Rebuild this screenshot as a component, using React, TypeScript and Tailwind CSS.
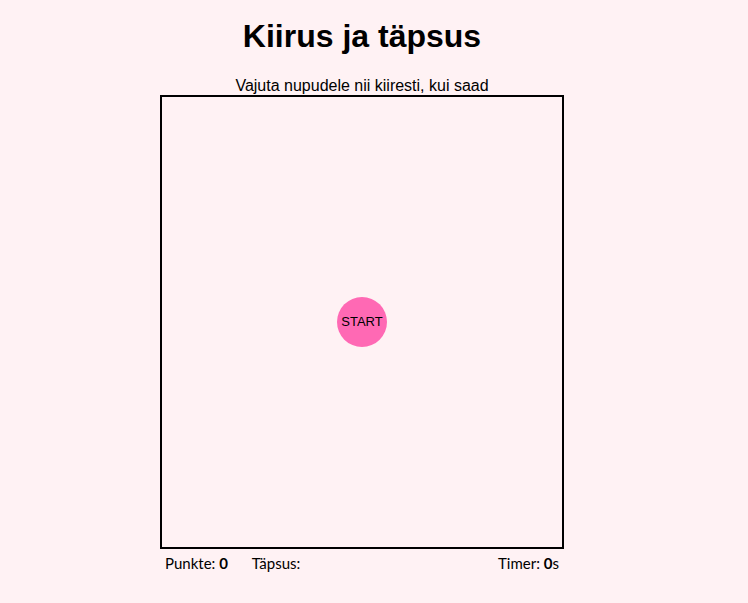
import React from "react";

export default function App() {
  return (
    <main className="min-h-screen bg-[#fff2f4] pr-6 pt-4 font-['Liberation_Sans',Arial,sans-serif] text-black">
      <div className="mx-auto w-full max-w-[404px]">
        <h1 className="text-center text-[32px] leading-10 font-bold">Kiirus ja täpsus</h1>
        <p className="mt-5 text-center text-base leading-[19px]">Vajuta nupudele nii kiiresti, kui saad</p>
        <section className="flex h-[454px] items-center justify-center border-2 border-black">
          <button type="button" className="size-[50px] rounded-full bg-[#ff69b4] text-[13px]">
            START
          </button>
        </section>
        <div className="flex px-[5px] pt-1 font-['Lato','Open_Sans',sans-serif] text-[15px] leading-5">
          <span>
            Punkte: <b>0</b>
          </span>
          <span className="ml-6">Täpsus:</span>
          <span className="ml-auto">
            Timer: <b>0</b>s
          </span>
        </div>
      </div>
    </main>
  );
}
